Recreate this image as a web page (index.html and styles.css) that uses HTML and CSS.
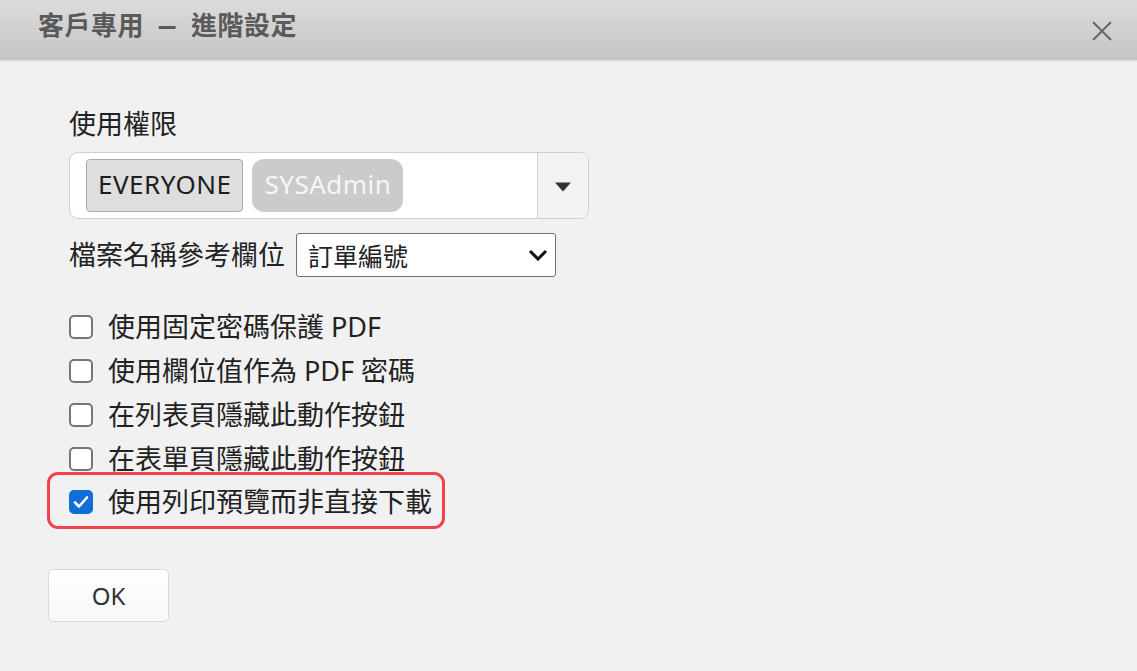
FILE: index.html
```html
<!DOCTYPE html>
<html lang="zh-Hant">
<head>
<meta charset="utf-8">
<title>客戶專用 — 進階設定</title>
<link rel="stylesheet" href="styles.css">
</head>
<body>
<div class="dialog">
  <header class="header">
    <h1 class="title">客戶專用 <span class="dash">—</span> 進階設定</h1>
    <button class="close" aria-label="close">
      <svg width="20" height="20" viewBox="0 0 20 20"><path d="M1 1 L19 19 M19 1 L1 19" stroke="#666" stroke-width="2" fill="none"/></svg>
    </button>
  </header>
  <main class="content">
    <div class="form">
      <div class="label">使用權限</div>
      <div class="tagbox">
        <div class="tags">
          <span class="tag tag-selected">EVERYONE</span>
          <span class="tag tag-muted">SYSAdmin</span>
        </div>
        <div class="tag-toggle">
          <svg width="18" height="10" viewBox="0 0 18 10"><path d="M1 0.5 H17 L9 9.5 Z" fill="#333"/></svg>
        </div>
      </div>
      <div class="field-row">
        <span class="field-label">檔案名稱參考欄位</span>
        <div class="select">
          <span>訂單編號</span>
          <svg width="20" height="12" viewBox="0 0 20 12"><path d="M2 2 L10 10 L18 2" stroke="#111" stroke-width="3" fill="none"/></svg>
        </div>
      </div>
      <div class="checks">
        <label class="check"><span class="box"></span><span>使用固定密碼保護 PDF</span></label>
        <label class="check"><span class="box"></span><span>使用欄位值作為 PDF 密碼</span></label>
        <label class="check"><span class="box"></span><span>在列表頁隱藏此動作按鈕</span></label>
        <label class="check"><span class="box"></span><span>在表單頁隱藏此動作按鈕</span></label>
        <label class="check check-highlight"><span class="box box-checked">
          <svg width="16" height="14" viewBox="0 0 16 14"><path d="M2 7.5 L6 11.5 L14 2.5" stroke="#fff" stroke-width="2.6" fill="none" stroke-linecap="round" stroke-linejoin="round"/></svg>
        </span><span>使用列印預覽而非直接下載</span></label>
      </div>
    </div>
    <button class="ok">OK</button>
  </main>
</div>
</body>
</html>
```
FILE: styles.css
```css
html, body {
  margin: 0;
  padding: 0;
  height: 100%;
}
body {
  background: #f1f1f1;
  font-family: "Noto Sans", "Noto Sans CJK TC", sans-serif;
  color: #222;
}
.dialog {
  display: flex;
  flex-direction: column;
  min-height: 100%;
}
.header {
  height: 60px;
  box-sizing: border-box;
  display: flex;
  justify-content: space-between;
  align-items: flex-start;
  padding: 7px 25px 0 38px;
  background: linear-gradient(#dcdcdc, #c5c5c5);
  box-shadow: 0 1px 2px rgba(0,0,0,0.12);
}
.title {
  margin: 0;
  font-size: 26px;
  line-height: 36px;
  font-weight: 700;
  color: #5a5a5a;
  letter-spacing: 0.5px;
  word-spacing: 3px;
}
.dash {
  display: inline-block;
  transform: scaleX(0.7);
}
.close {
  margin-top: 14px;
  padding: 0;
  border: 0;
  background: none;
  width: 20px;
  height: 20px;
  display: flex;
}
.content {
  padding: 46px 0 0 48px;
  display: flex;
  flex-direction: column;
  align-items: flex-start;
}
.form {
  padding-left: 21px;
  display: flex;
  flex-direction: column;
  align-items: flex-start;
}
.label {
  font-size: 27px;
  line-height: 36px;
}
.tagbox {
  margin-top: 10px;
  width: 520px;
  height: 67px;
  box-sizing: border-box;
  border: 1px solid #cfcfcf;
  border-radius: 9px;
  background: #fff;
  display: flex;
  overflow: hidden;
}
.tags {
  flex: 1;
  display: flex;
  gap: 9px;
  padding: 6px 0 0 16px;
}
.tag {
  height: 53px;
  box-sizing: border-box;
  display: flex;
  align-items: center;
  font-size: 26px;
  letter-spacing: 0.5px;
  padding: 0 11px 4px;
}
.tag-selected {
  background: #dedede;
  border: 1px solid #a9a9a9;
  border-radius: 4px;
  color: #1e1e1e;
}
.tag-muted {
  background: #cbcbcb;
  border-radius: 12px;
  color: #f6f6f6;
  padding: 0 12px 4px;
}
.tag-toggle {
  width: 51px;
  border-left: 1px solid #cfcfcf;
  background: #f3f3f3;
  display: flex;
  align-items: center;
  justify-content: center;
  padding-top: 2px;
  box-sizing: border-box;
}
.field-row {
  margin-top: 14px;
  display: flex;
  align-items: center;
  gap: 11px;
  height: 44px;
}
.field-label {
  font-size: 27px;
  line-height: 36px;
}
.select {
  width: 260px;
  height: 44px;
  box-sizing: border-box;
  border: 1px solid #6f6f6f;
  border-radius: 3px;
  background: #fff;
  display: flex;
  align-items: center;
  justify-content: space-between;
  padding: 0 7px 0 11px;
  font-size: 25px;
  color: #222;
}
.checks {
  margin-top: 28px;
  display: flex;
  flex-direction: column;
  align-items: flex-start;
}
.check {
  height: 44px;
  display: flex;
  align-items: center;
  gap: 15px;
  font-size: 27px;
  line-height: 36px;
}
.box {
  width: 24px;
  height: 24px;
  box-sizing: border-box;
  border: 2px solid #767676;
  border-radius: 5px;
  background: #fff;
  display: flex;
  align-items: center;
  justify-content: center;
}
.box-checked {
  background: #0f6fd6;
  border-color: #0f6fd6;
}
.check-highlight {
  margin-top: -9px;
  margin-left: -22px;
  height: 57px;
  box-sizing: border-box;
  border: 3px solid #f2414a;
  border-radius: 11px;
  padding: 2px 10px 0 19px;
}
.ok {
  margin-top: 40px;
  width: 121px;
  height: 53px;
  border: 1px solid #d9d9d9;
  border-radius: 5px;
  background: linear-gradient(#ffffff, #f7f7f7);
  font-family: "Noto Sans", sans-serif;
  font-size: 24px;
  color: #333;
  padding: 0;
}
```
